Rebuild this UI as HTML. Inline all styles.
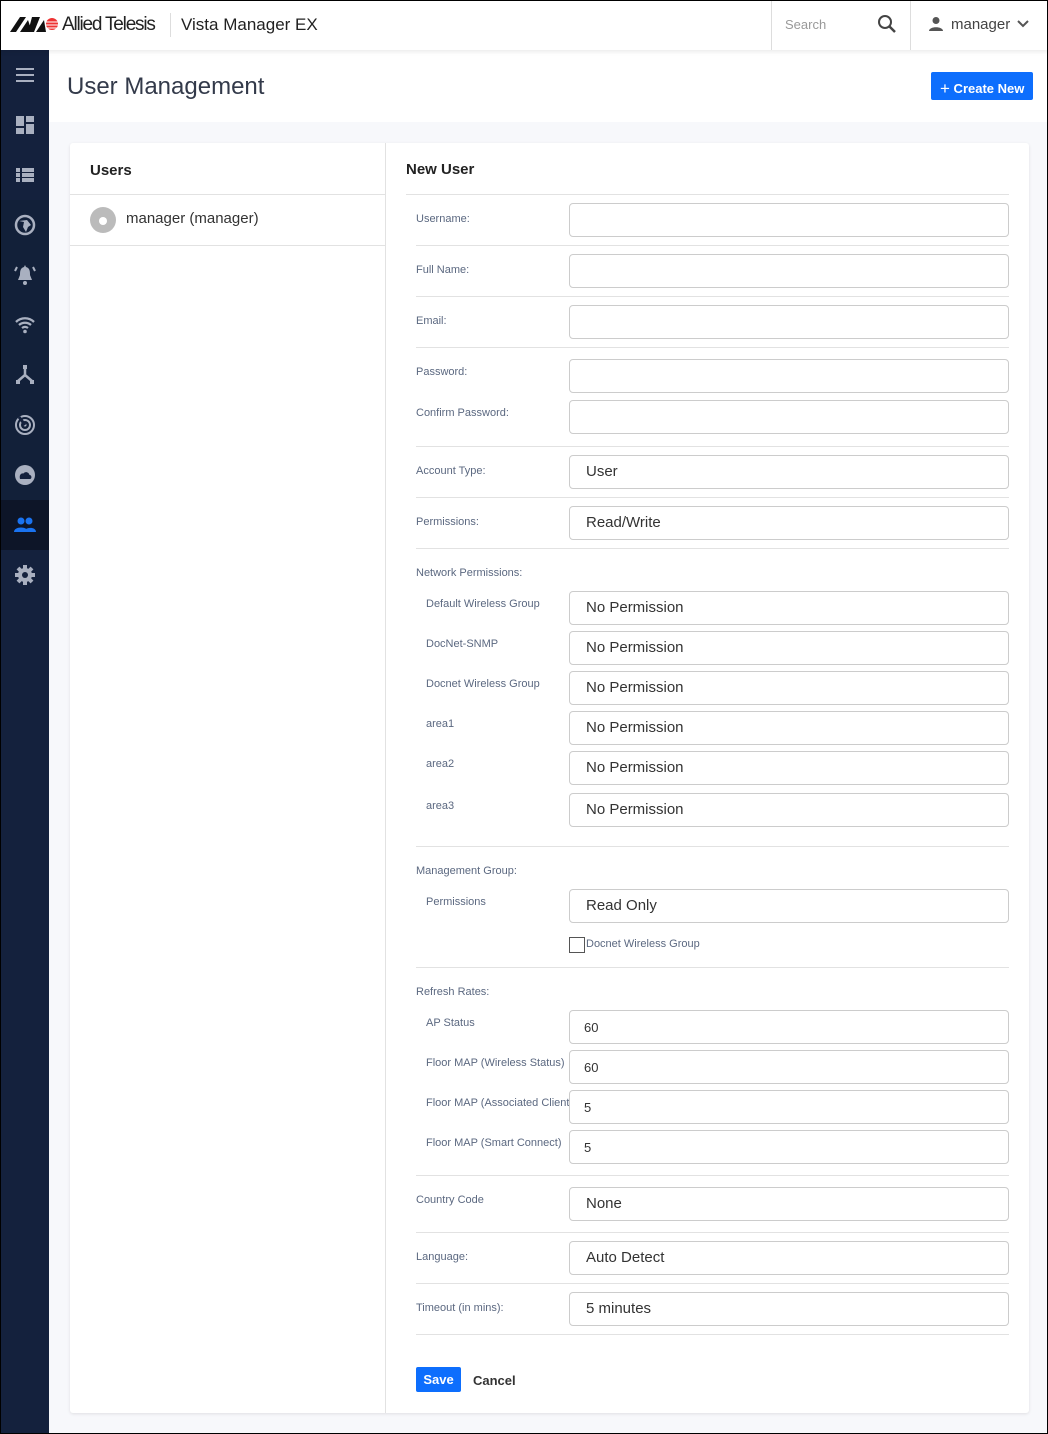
<!DOCTYPE html>
<html><head><meta charset="utf-8"><style>
*{box-sizing:border-box;margin:0;padding:0}
body{width:1048px;height:1434px;position:relative;background:#f7f8fb;font-family:"Liberation Sans",Arial,sans-serif;overflow:hidden}
.frame{position:absolute;left:0;top:0;width:1048px;height:1434px;border:1px solid #000;z-index:10;pointer-events:none}
.a{position:absolute}
.hdr{left:0;top:0;width:1048px;height:50px;background:#fff;box-shadow:0 2px 4px rgba(0,0,0,.08);z-index:2}
.side{left:0;top:50px;width:49px;height:1384px;background:#14213d}
.ic{left:13px;width:24px;height:24px}
.title{left:49px;top:50px;width:999px;height:72px;background:#fff}
.card{left:70px;top:143px;width:959px;height:1270px;background:#fff;box-shadow:0 1px 3px rgba(0,0,0,.1);border-radius:3px}
.lab{font-size:11px;color:#5b6880;left:416px;white-space:nowrap;overflow:hidden}
.sub{left:426px;width:143px}
.inp{left:569px;width:440px;height:34px;border:1px solid #ccc;border-radius:4px;font-size:15px;color:#333;padding:8px 16px;line-height:16px}
.sm{font-size:13px;padding:9px 14px}
.sep{left:416px;width:593px;height:1px;background:#e2e2e2}
</style></head><body>
<div class="frame"></div>
<div class="a hdr">
 <svg class="a" style="left:10px;top:16px" width="50" height="17" viewBox="0 0 50 17"><path d="M0 16L10 1H16L6 16Z M10 16L18 4L22 16Z M22 1H30L24 16H18Z M26 16L34 4L36 16Z" fill="#111"/><circle cx="42" cy="8" r="6" fill="#e33"/><path d="M36 6H48M36 9H48M37 12H47" stroke="#fff" stroke-width="1"/></svg>
 <div class="a" style="left:62px;top:14px;font-size:19px;color:#222;letter-spacing:-1.2px">Allied Telesis</div>
 <div class="a" style="left:170px;top:13px;width:1px;height:24px;background:#ddd"></div>
 <div class="a" style="left:181px;top:15px;font-size:17px;color:#222">Vista Manager EX</div>
 <div class="a" style="left:771px;top:0;width:1px;height:50px;background:#ddd"></div>
 <div class="a" style="left:785px;top:17px;font-size:13px;color:#999">Search</div>
 <svg class="a" style="left:877px;top:14px" width="20" height="20" viewBox="0 0 20 20"><circle cx="8" cy="8" r="6" stroke="#444" stroke-width="2" fill="none"/><path d="M12.5 12.5L18 18" stroke="#444" stroke-width="2.5"/></svg>
 <div class="a" style="left:910px;top:0;width:1px;height:50px;background:#ddd"></div>
 <svg class="a" style="left:928px;top:16px" width="16" height="16" viewBox="0 0 16 16"><circle cx="8" cy="4.5" r="3.5" fill="#555"/><path d="M1 15C1 10 15 10 15 15Z" fill="#555"/></svg>
 <div class="a" style="left:951px;top:16px;font-size:15px;color:#444">manager</div>
 <svg class="a" style="left:1017px;top:20px" width="12" height="8" viewBox="0 0 12 8"><path d="M1 1L6 6L11 1" stroke="#555" stroke-width="2" fill="none"/></svg>
</div>
<div class="a side">
 <svg class="a ic" style="top:13px" viewBox="0 0 24 24"><path d="M3 6H21M3 12H21M3 18H21" stroke="#a9b0c0" stroke-width="2"/></svg>
 <svg class="a ic" style="top:63px" viewBox="0 0 24 24"><path d="M3 3H11V13H3ZM13 3H21V9H13ZM13 11H21V21H13ZM3 15H11V21H3Z" fill="#a9b0c0"/></svg>
 <svg class="a ic" style="top:113px" viewBox="0 0 24 24"><path d="M3 5H7V9H3ZM9 5H21V9H9ZM3 10H7V14H3ZM9 10H21V14H9ZM3 15H7V19H3ZM9 15H21V19H9Z" fill="#a9b0c0"/></svg>
 <div class="a" style="left:0;top:150px;width:49px;height:300px;background:#122039"></div>
 <svg class="a ic" style="top:163px" viewBox="0 0 24 24"><circle cx="12" cy="12" r="9" fill="none" stroke="#a9b0c0" stroke-width="2.5"/><path d="M6 8L11 9L10 14L13 19L15 14L18 12L14 7Z" fill="#a9b0c0"/></svg>
 <svg class="a ic" style="top:213px" viewBox="0 0 24 24"><path d="M12 2L13 4C17 5 17 9 17 12L19 17H5L7 12C7 9 7 5 11 4Z" fill="#a9b0c0"/><circle cx="12" cy="20" r="2" fill="#a9b0c0"/><path d="M4 4L2 8M20 4L22 8" stroke="#a9b0c0" stroke-width="2"/></svg>
 <svg class="a ic" style="top:263px" viewBox="0 0 24 24"><path d="M3 9C8 4 16 4 21 9M6 12C9.5 9 14.5 9 18 12M9 15C11 13.5 13 13.5 15 15" stroke="#a9b0c0" stroke-width="2.3" fill="none"/><circle cx="12" cy="18.5" r="1.8" fill="#a9b0c0"/></svg>
 <svg class="a ic" style="top:313px" viewBox="0 0 24 24"><path d="M12 4V12L5 18M12 12L19 18" stroke="#a9b0c0" stroke-width="2.5" fill="none"/><rect x="10" y="2" width="4" height="4" fill="#a9b0c0"/><rect x="3" y="17" width="4" height="4" fill="#a9b0c0"/><rect x="17" y="17" width="4" height="4" fill="#a9b0c0"/></svg>
 <svg class="a ic" style="top:363px" viewBox="0 0 24 24"><circle cx="12" cy="12" r="9" fill="none" stroke="#a9b0c0" stroke-width="2"/><circle cx="12" cy="12" r="5" fill="none" stroke="#a9b0c0" stroke-width="2"/><circle cx="12" cy="12" r="1.5" fill="#a9b0c0"/><path d="M12 12L6 4" stroke="#14213d" stroke-width="3"/></svg>
 <svg class="a ic" style="top:413px" viewBox="0 0 24 24"><circle cx="12" cy="12" r="10" fill="#a9b0c0"/><path d="M7 16H17C19 16 19 12 16.5 12C16 9 12 8 10.5 10.5C8 10 6 12 7 16Z" fill="#14213d"/></svg>
 <div class="a" style="left:0;top:450px;width:49px;height:50px;background:#0d1528"></div>
 <svg class="a ic" style="top:463px" viewBox="0 0 24 24"><circle cx="8" cy="8" r="3.5" fill="#1a73f0"/><circle cx="16" cy="8" r="3.5" fill="#1a73f0"/><path d="M1 19C1 13 15 13 15 19ZM11 19C11 14 23 13 23 19Z" fill="#1a73f0"/></svg>
 <svg class="a ic" style="top:513px" viewBox="0 0 24 24"><circle cx="12" cy="12" r="7" fill="#a9b0c0"/><path d="M12 2V22M2 12H22M5 5L19 19M19 5L5 19" stroke="#a9b0c0" stroke-width="4"/><circle cx="12" cy="12" r="3" fill="#14213d"/></svg>
</div>
<div class="a title"><div class="a" style="left:18px;top:23px;font-size:24px;color:#333a4a">User Management</div>
 <div class="a" style="left:882px;top:22px;width:102px;height:28px;background:#0d6efd;border-radius:2px;color:#fff;font-size:13px;font-weight:bold;padding:6px 0 0 9px"><span style="font-size:17px;font-weight:normal;position:relative;top:1px">+</span>&nbsp;Create New</div>
</div>
<div class="a card">
 <div class="a" style="left:315px;top:0;width:1px;height:1270px;background:#e2e2e2"></div>
 <div class="a" style="left:20px;top:19px;font-size:15px;font-weight:bold;color:#222">Users</div>
 <div class="a" style="left:0;top:51px;width:315px;height:1px;background:#e2e2e2"></div>
 <div class="a" style="left:20px;top:64px;width:26px;height:26px;border-radius:50%;background:#bbb"><div class="a" style="left:9px;top:10px;width:8px;height:8px;border-radius:50%;background:#fff"></div></div>
 <div class="a" style="left:56px;top:67px;font-size:15px;color:#333">manager (manager)</div>
 <div class="a" style="left:0;top:102px;width:315px;height:1px;background:#e2e2e2"></div>
 <div class="a" style="left:336px;top:18px;font-size:15px;font-weight:bold;color:#222">New User</div>
</div>
<div class="a sep" style="left:406px;width:603px;top:194px"></div>
<div class="a lab" style="top:213px">Username:</div><div class="a inp" style="top:203px"></div><div class="a sep" style="top:245px"></div>
<div class="a lab" style="top:264px">Full Name:</div><div class="a inp" style="top:254px"></div><div class="a sep" style="top:296px"></div>
<div class="a lab" style="top:315px">Email:</div><div class="a inp" style="top:305px"></div><div class="a sep" style="top:347px"></div>
<div class="a lab" style="top:366px">Password:</div><div class="a inp" style="top:359px"></div>
<div class="a lab" style="top:407px">Confirm Password:</div><div class="a inp" style="top:400px"></div><div class="a sep" style="top:446px"></div>
<div class="a lab" style="top:465px">Account Type:</div><div class="a inp" style="top:455px">User</div><div class="a sep" style="top:497px"></div>
<div class="a lab" style="top:516px">Permissions:</div><div class="a inp" style="top:506px">Read/Write</div><div class="a sep" style="top:548px"></div>
<div class="a lab" style="top:567px">Network Permissions:</div>
<div class="a lab sub" style="top:598px">Default Wireless Group</div><div class="a inp" style="top:591px">No Permission</div>
<div class="a lab sub" style="top:638px">DocNet-SNMP</div><div class="a inp" style="top:631px">No Permission</div>
<div class="a lab sub" style="top:678px">Docnet Wireless Group</div><div class="a inp" style="top:671px">No Permission</div>
<div class="a lab sub" style="top:718px">area1</div><div class="a inp" style="top:711px">No Permission</div>
<div class="a lab sub" style="top:758px">area2</div><div class="a inp" style="top:751px">No Permission</div>
<div class="a lab sub" style="top:800px">area3</div><div class="a inp" style="top:793px">No Permission</div>
<div class="a sep" style="top:846px"></div>
<div class="a lab" style="top:865px">Management Group:</div>
<div class="a lab sub" style="top:896px">Permissions</div><div class="a inp" style="top:889px">Read Only</div>
<div class="a" style="left:569px;top:937px;width:16px;height:16px;border:1px solid #555"></div>
<div class="a lab" style="left:586px;top:938px">Docnet Wireless Group</div>
<div class="a sep" style="top:967px"></div>
<div class="a lab" style="top:986px">Refresh Rates:</div>
<div class="a lab sub" style="top:1017px">AP Status</div><div class="a inp sm" style="top:1010px">60</div>
<div class="a lab sub" style="top:1057px">Floor MAP (Wireless Status)</div><div class="a inp sm" style="top:1050px">60</div>
<div class="a lab sub" style="top:1097px">Floor MAP (Associated Clients)</div><div class="a inp sm" style="top:1090px">5</div>
<div class="a lab sub" style="top:1137px">Floor MAP (Smart Connect)</div><div class="a inp sm" style="top:1130px">5</div>
<div class="a sep" style="top:1175px"></div>
<div class="a lab" style="top:1194px">Country Code</div><div class="a inp" style="top:1187px">None</div><div class="a sep" style="top:1232px"></div>
<div class="a lab" style="top:1251px">Language:</div><div class="a inp" style="top:1241px">Auto Detect</div><div class="a sep" style="top:1283px"></div>
<div class="a lab" style="top:1302px">Timeout (in mins):</div><div class="a inp" style="top:1292px">5 minutes</div><div class="a sep" style="top:1334px"></div>
<div class="a" style="left:416px;top:1367px;width:45px;height:25px;background:#0d6efd;border-radius:2px;color:#fff;font-size:13px;font-weight:bold;text-align:center;line-height:25px">Save</div>
<div class="a" style="left:473px;top:1373px;font-size:13px;font-weight:bold;color:#333">Cancel</div>
</body></html>
